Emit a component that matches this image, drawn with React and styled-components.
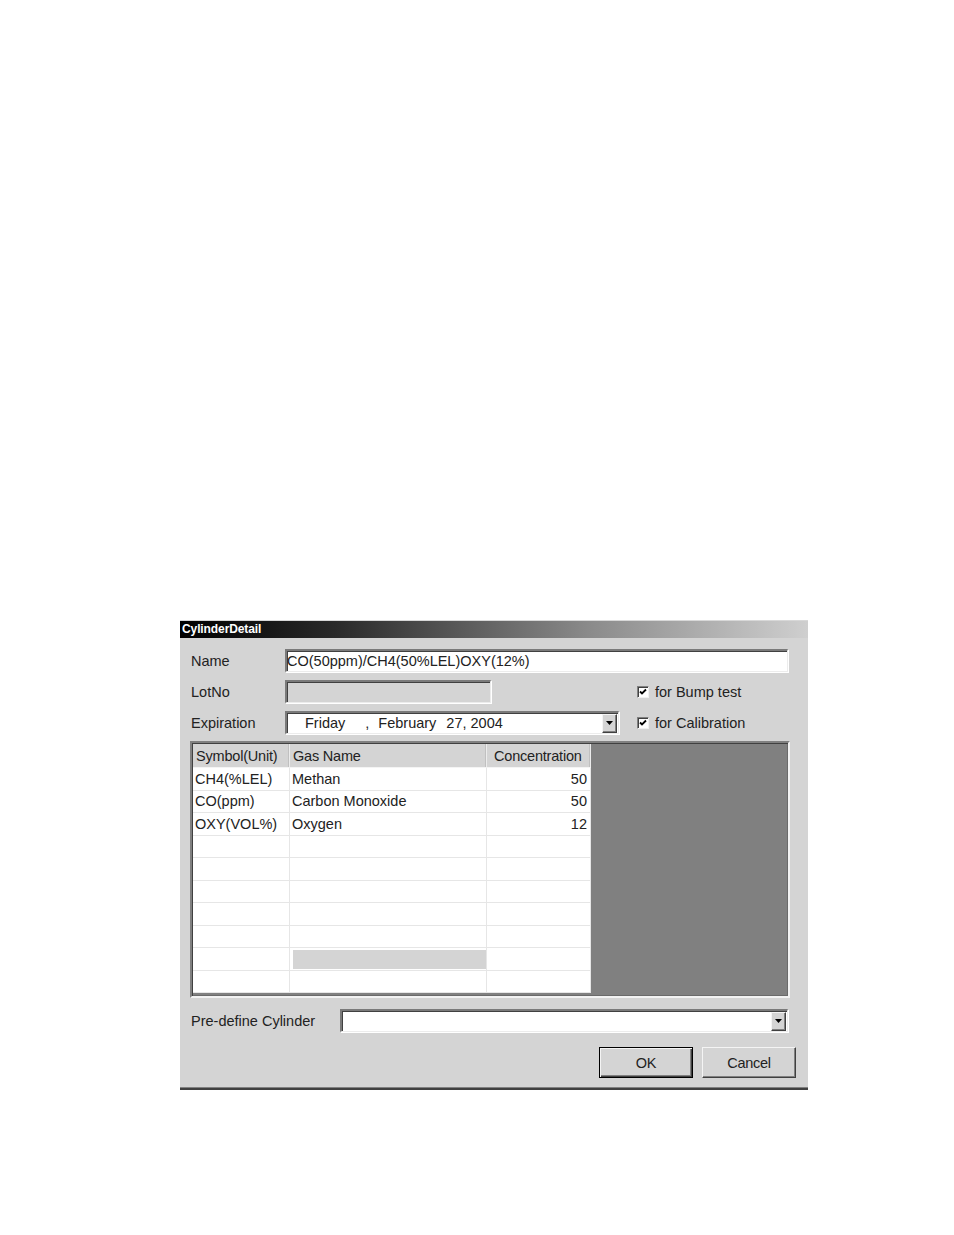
import React from "react";
import styled, { createGlobalStyle } from "styled-components";

const Global = createGlobalStyle`
  html, body { margin: 0; padding: 0; background: #fff; }
  body { font-family: "Liberation Sans", Arial, sans-serif; }
`;

const Page = styled.div`
  width: 954px;
  min-height: 1235px;
  padding: 620px 0 0 180px;
  box-sizing: border-box;
`;

const Dialog = styled.div`
  width: 628px;
  background: #d4d4d4;
  border-top: 1px solid #d8d8d8;
  border-bottom: 2px solid #404040;
  box-shadow: inset 0 -1px 0 #808080;
  font-size: 14.5px;
  color: #222;
`;

const TitleBar = styled.div`
  height: 17px;
  background: linear-gradient(to right, #000 0%, #2a2a2a 25%, #8a8a8a 65%, #cfcfcf 100%);
  color: #fff;
  font-weight: bold;
  font-size: 12px;
  line-height: 17px;
  padding-left: 2px;
  letter-spacing: -0.1px;
`;

const Body = styled.div`
  padding: 11px 20px 10px 10px;
  display: flex;
  flex-direction: column;
`;

const Row = styled.div`
  display: flex;
  align-items: center;
  height: 23px;
  margin-bottom: ${(p) => p.$mb || 0}px;
  margin-top: ${(p) => p.$mt || 0}px;
  margin-left: 1px;
`;

const Label = styled.div`
  width: ${(p) => p.$w || 94}px;
  flex: none;
`;

const TextBox = styled.div`
  box-sizing: border-box;
  height: 23px;
  width: ${(p) => (p.$w ? `${p.$w}px` : "auto")};
  flex: ${(p) => (p.$w ? "none" : "1")};
  background: ${(p) => (p.$disabled ? "#d4d4d4" : "#fff")};
  border-top: 2px solid #7a7a7a;
  border-left: 2px solid #7a7a7a;
  border-right: 1px solid #ececec;
  border-bottom: 1px solid #ececec;
  box-shadow: inset 1px 1px 0 #404040, 1px 1px 0 #fff;
  display: flex;
  align-items: center;
  padding-left: 0;
  white-space: nowrap;
  overflow: hidden;
`;

const DateText = styled.div`
  display: flex;
  flex: 1;
  padding-left: 18px;
`;

const DatePart = styled.span`
  margin-right: ${(p) => p.$mr || 0}px;
`;

const DropButton = styled.div`
  width: 15px;
  height: 19px;
  flex: none;
  box-sizing: border-box;
  background: #d4d4d4;
  border-top: 1px solid #f4f4f4;
  border-left: 1px solid #f4f4f4;
  border-right: 1px solid #404040;
  border-bottom: 1px solid #404040;
  box-shadow: inset -1px -1px 0 #808080;
  display: flex;
  align-items: center;
  justify-content: center;
  margin-right: 1px;
`;

const Arrow = () => (
  <svg width="7" height="4" viewBox="0 0 7 4">
    <path d="M0 0 H7 L3.5 4 Z" fill="#000" />
  </svg>
);

const CheckWrap = styled.div`
  display: flex;
  align-items: center;
  margin-left: ${(p) => p.$ml}px;
`;

const CheckBoxBox = styled.div`
  width: 12px;
  height: 12px;
  box-sizing: border-box;
  background: #fff;
  border-top: 1px solid #808080;
  border-left: 1px solid #808080;
  border-right: 1px solid #f0f0f0;
  border-bottom: 1px solid #f0f0f0;
  box-shadow: inset 1px 1px 0 #404040;
  margin-right: 6px;
  display: flex;
  align-items: center;
  justify-content: center;
`;

const CheckBox = ({ children, ml }) => (
  <CheckWrap $ml={ml}>
    <CheckBoxBox>
      <svg width="8" height="8" viewBox="0 0 8 8">
        <path d="M1 3.5 L3 5.5 L7 1.5" stroke="#000" strokeWidth="1.8" fill="none" />
      </svg>
    </CheckBoxBox>
    {children}
  </CheckWrap>
);

const GridFrame = styled.div`
  margin-top: 7px;
  width: 600px;
  height: 257px;
  box-sizing: border-box;
  border-top: 2px solid #808080;
  border-left: 2px solid #808080;
  border-right: 2px solid #f2f2f2;
  border-bottom: 2px solid #f2f2f2;
  box-shadow: inset 1px 1px 0 #404040, inset -1px -1px 0 #6a6a6a;
  background: #808080;
  padding: 1px 0 0 1px;
  display: flex;
`;

const Table = styled.div`
  display: grid;
  grid-template-columns: 97px 197px 104px;
  grid-template-rows: 24px repeat(10, 22.5px);
  width: 398px;
  align-self: flex-start;
  background: #fff;
`;

const HeadCell = styled.div`
  background: #d4d4d4;
  border-right: 1px solid #ececec;
  border-bottom: 1px solid #f4f4f4;
  box-shadow: inset -1px 0 0 #c0c0c0;
  display: flex;
  align-items: center;
  padding-left: ${(p) => p.$pl || 3}px;
  white-space: nowrap;
  letter-spacing: -0.2px;
`;

const Cell = styled.div`
  box-sizing: border-box;
  border-right: 1px solid #e6e6e6;
  border-bottom: 1px solid #e6e6e6;
  display: flex;
  align-items: center;
  justify-content: ${(p) => (p.$right ? "flex-end" : "flex-start")};
  padding: 0 ${(p) => (p.$right ? 3 : 0)}px 0 2px;
  white-space: nowrap;
  position: relative;
`;

const Selected = styled.div`
  position: absolute;
  left: 3px;
  right: 0;
  top: 2px;
  bottom: 1px;
  background: #d4d4d4;
`;

const Footer = styled.div`
  display: flex;
  justify-content: flex-end;
  gap: 9px;
  margin-top: 15px;
  margin-right: -8px;
`;

const Button = styled.button`
  width: 94px;
  height: 31px;
  box-sizing: border-box;
  background: #d4d4d4;
  font-family: "Liberation Sans", Arial, sans-serif;
  font-size: 14.5px;
  color: #222;
  letter-spacing: -0.3px;
  padding: 0;
  border-top: 1px solid ${(p) => (p.$default ? "#000" : "#f4f4f4")};
  border-left: 1px solid ${(p) => (p.$default ? "#000" : "#f4f4f4")};
  border-right: 1px solid ${(p) => (p.$default ? "#000" : "#404040")};
  border-bottom: 1px solid ${(p) => (p.$default ? "#000" : "#404040")};
  box-shadow: ${(p) =>
    p.$default
      ? "inset 1px 1px 0 #f4f4f4, inset -1px -1px 0 #404040, inset -2px -2px 0 #808080"
      : "inset -1px -1px 0 #808080"};
`;

const rows = [
  ["CH4(%LEL)", "Methan", "50"],
  ["CO(ppm)", "Carbon Monoxide", "50"],
  ["OXY(VOL%)", "Oxygen", "12"],
  ["", "", ""],
  ["", "", ""],
  ["", "", ""],
  ["", "", ""],
  ["", "", ""],
  ["", "sel", ""],
  ["", "", ""],
];

export default function App() {
  return (
    <Page>
      <Global />
      <Dialog>
        <TitleBar>CylinderDetail</TitleBar>
        <Body>
          <Row $mb={8}>
            <Label>Name</Label>
            <TextBox>CO(50ppm)/CH4(50%LEL)OXY(12%)</TextBox>
          </Row>
          <Row $mb={8}>
            <Label>LotNo</Label>
            <TextBox $w={206} $disabled />
            <CheckBox ml={146}>for Bump test</CheckBox>
          </Row>
          <Row>
            <Label>Expiration</Label>
            <TextBox $w={334}>
              <DateText>
                <DatePart $mr={20}>Friday</DatePart>
                <DatePart $mr={9}>,</DatePart>
                <DatePart $mr={10}>February</DatePart>
                <DatePart>27, 2004</DatePart>
              </DateText>
              <DropButton>
                <Arrow />
              </DropButton>
            </TextBox>
            <CheckBox ml={18}>for Calibration</CheckBox>
          </Row>
          <GridFrame>
            <Table>
              <HeadCell>Symbol(Unit)</HeadCell>
              <HeadCell>Gas Name</HeadCell>
              <HeadCell $pl={7}>Concentration</HeadCell>
              {rows.map((r, i) => (
                <React.Fragment key={i}>
                  <Cell>{r[0]}</Cell>
                  <Cell>{r[1] === "sel" ? <Selected /> : r[1]}</Cell>
                  <Cell $right>{r[2]}</Cell>
                </React.Fragment>
              ))}
            </Table>
          </GridFrame>
          <Row $mt={11}>
            <Label $w={149}>Pre-define Cylinder</Label>
            <TextBox>
              <DateText />
              <DropButton>
                <Arrow />
              </DropButton>
            </TextBox>
          </Row>
          <Footer>
            <Button $default>OK</Button>
            <Button>Cancel</Button>
          </Footer>
        </Body>
      </Dialog>
    </Page>
  );
}
